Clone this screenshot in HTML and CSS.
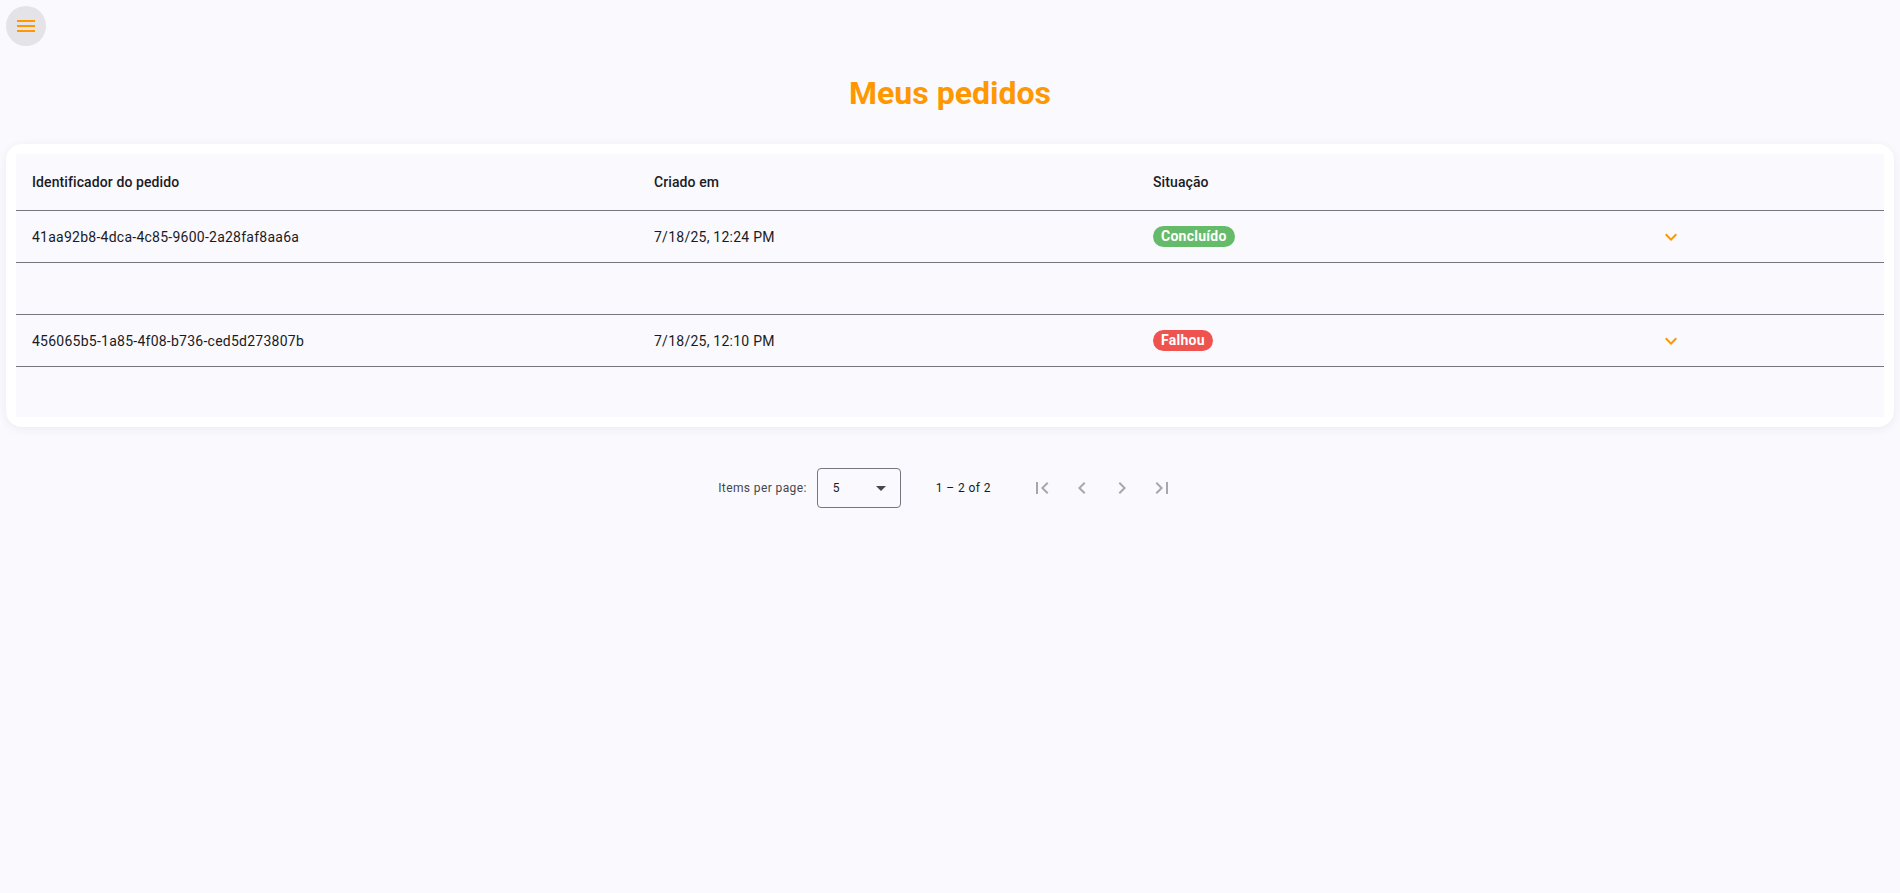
FILE: index.html
```html
<!DOCTYPE html>
<html lang="pt">
<head>
<meta charset="utf-8">
<title>Meus pedidos</title>
<link rel="stylesheet" href="styles.css">
</head>
<body>
<div class="page">
  <button class="menu-btn" aria-label="menu">
    <svg viewBox="0 0 24 24" width="24" height="24"><path d="M3 18h18v-2H3v2zm0-5h18v-2H3v2zm0-7v2h18V6H3z"/></svg>
  </button>
  <h1 class="title">Meus pedidos</h1>
  <div class="card">
    <div class="table">
      <div class="row header">
        <div class="cell">Identificador do pedido</div>
        <div class="cell">Criado em</div>
        <div class="cell">Situação</div>
        <div class="cell"></div>
      </div>
      <div class="row">
        <div class="cell">41aa92b8-4dca-4c85-9600-2a28faf8aa6a</div>
        <div class="cell">7/18/25, 12:24 PM</div>
        <div class="cell"><span class="badge ok">Concluído</span></div>
        <div class="cell"><svg class="expand" viewBox="0 0 24 24" width="24" height="24"><path d="M16.59 8.59L12 13.17 7.41 8.59 6 10l6 6 6-6z"/></svg></div>
      </div>
      <div class="row detail"></div>
      <div class="row">
        <div class="cell">456065b5-1a85-4f08-b736-ced5d273807b</div>
        <div class="cell">7/18/25, 12:10 PM</div>
        <div class="cell"><span class="badge fail">Falhou</span></div>
        <div class="cell"><svg class="expand" viewBox="0 0 24 24" width="24" height="24"><path d="M16.59 8.59L12 13.17 7.41 8.59 6 10l6 6 6-6z"/></svg></div>
      </div>
      <div class="row detail last"></div>
    </div>
  </div>
  <div class="paginator">
    <span class="pg-label">Items per page:</span>
    <div class="pg-select">
      <span>5</span>
      <span class="pg-arrow"></span>
    </div>
    <span class="pg-range">1 – 2 of 2</span>
    <button class="pg-btn" aria-label="first"><svg viewBox="0 0 24 24" width="24" height="24"><path d="M18.41 16.59L13.82 12l4.59-4.59L17 6l-6 6 6 6zM6 6h2v12H6z"/></svg></button>
    <button class="pg-btn" aria-label="previous"><svg viewBox="0 0 24 24" width="24" height="24"><path d="M15.41 7.41L14 6l-6 6 6 6 1.41-1.41L10.83 12z"/></svg></button>
    <button class="pg-btn" aria-label="next"><svg viewBox="0 0 24 24" width="24" height="24"><path d="M10 6L8.59 7.41 13.17 12l-4.58 4.59L10 18l6-6z"/></svg></button>
    <button class="pg-btn" aria-label="last"><svg viewBox="0 0 24 24" width="24" height="24"><path d="M5.59 7.41L10.18 12l-4.59 4.59L7 18l6-6-6-6zM16 6h2v12h-2z"/></svg></button>
  </div>
</div>
</body>
</html>
```

FILE: styles.css
```css
* { box-sizing: border-box; }
html, body {
  margin: 0;
  padding: 0;
  background: #f9f9fe;
  font-family: Roboto, "Liberation Sans", sans-serif;
  color: #1b1b1f;
}
.page {
  padding: 6px;
  min-height: 893px;
}
.menu-btn {
  display: flex;
  align-items: center;
  justify-content: center;
  width: 40px;
  height: 40px;
  border: 0;
  border-radius: 50%;
  background: #e4e3e8;
  padding: 0;
  cursor: pointer;
}
.menu-btn svg { fill: #ff9800; }
.title {
  margin: 27px 0 31px;
  font-size: 32px;
  line-height: 40px;
  font-weight: 700;
  text-align: center;
  color: #ff9800;
}
.card {
  background: #ffffff;
  border-radius: 16px;
  padding: 10px;
  box-shadow: 0 2px 10px rgba(60, 60, 90, 0.07);
}
.table {
  background: #f9f9fe;
}
.row {
  display: grid;
  grid-template-columns: 622px 499px 506px 1fr;
  align-items: center;
  height: 52px;
  border-bottom: 1px solid #76767e;
  font-size: 14px;
  letter-spacing: 0.25px;
}
.row.header {
  height: 57px;
  font-weight: 500;
  letter-spacing: 0.1px;
}
.row.last {
  height: 50px;
  border-bottom: 0;
}
.cell {
  padding-left: 16px;
  display: flex;
  align-items: center;
}
.expand { fill: #ff9800; display: block; }
.badge {
  display: inline-block;
  height: 21px;
  line-height: 21px;
  padding: 0 8px;
  border-radius: 11px;
  color: #ffffff;
  font-weight: 700;
  font-size: 14px;
  letter-spacing: 0.25px;
}
.badge.ok { background: #66bb6a; }
.badge.fail { background: #ef5350; }
.paginator {
  display: flex;
  align-items: center;
  justify-content: center;
  height: 56px;
  margin-top: 33px;
  font-size: 12px;
  letter-spacing: 0.4px;
  color: #1b1b1f;
}
.pg-label {
  margin-right: 10px;
  color: #44474e;
}
.pg-select {
  width: 84px;
  height: 40px;
  border: 1px solid #76767e;
  border-radius: 4px;
  display: flex;
  align-items: center;
  justify-content: space-between;
  padding: 0 14px 0 15px;
  font-size: 12px;
}
.pg-arrow {
  width: 0;
  height: 0;
  border-left: 5px solid transparent;
  border-right: 5px solid transparent;
  border-top: 5px solid #46464f;
}
.pg-range {
  margin: 0 31px 0 35px;
}
.pg-btn {
  width: 40px;
  height: 40px;
  border: 0;
  background: transparent;
  padding: 0;
  display: flex;
  align-items: center;
  justify-content: center;
}
.pg-btn svg { fill: #a6a6ad; }
```
